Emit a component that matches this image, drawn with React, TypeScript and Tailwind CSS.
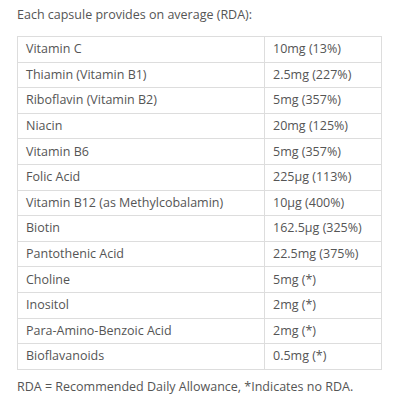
import React from "react";

const rows: [string, string][] = [
  ["Vitamin C", "10mg (13%)"],
  ["Thiamin (Vitamin B1)", "2.5mg (227%)"],
  ["Riboflavin (Vitamin B2)", "5mg (357%)"],
  ["Niacin", "20mg (125%)"],
  ["Vitamin B6", "5mg (357%)"],
  ["Folic Acid", "225µg (113%)"],
  ["Vitamin B12 (as Methylcobalamin)", "10µg (400%)"],
  ["Biotin", "162.5µg (325%)"],
  ["Pantothenic Acid", "22.5mg (375%)"],
  ["Choline", "5mg (*)"],
  ["Inositol", "2mg (*)"],
  ["Para-Amino-Benzoic Acid", "2mg (*)"],
  ["Bioflavanoids", "0.5mg (*)"],
];

const App = () => {
  return (
    <div className="w-[400px] h-[400px] bg-white px-[17px] pt-[6px] text-[12.5px] text-[#555] font-['Open_Sans',sans-serif]">
      <p className="leading-[18px]">Each capsule provides on average (RDA):</p>
      <table className="mt-[12px] w-[365px] border-collapse">
        <tbody>
          {rows.map(([name, amount]) => (
            <tr key={name} className="h-[25.6px]">
              <td className="w-[247px] border border-[#ddd] px-[8px] py-0 leading-[18px]">{name}</td>
              <td className="border border-[#ddd] px-[8px] py-0 leading-[18px]">{amount}</td>
            </tr>
          ))}
        </tbody>
      </table>
      <p className="mt-[8px] leading-[18px]">RDA = Recommended Daily Allowance, *Indicates no RDA.</p>
    </div>
  );
};

export default App;
